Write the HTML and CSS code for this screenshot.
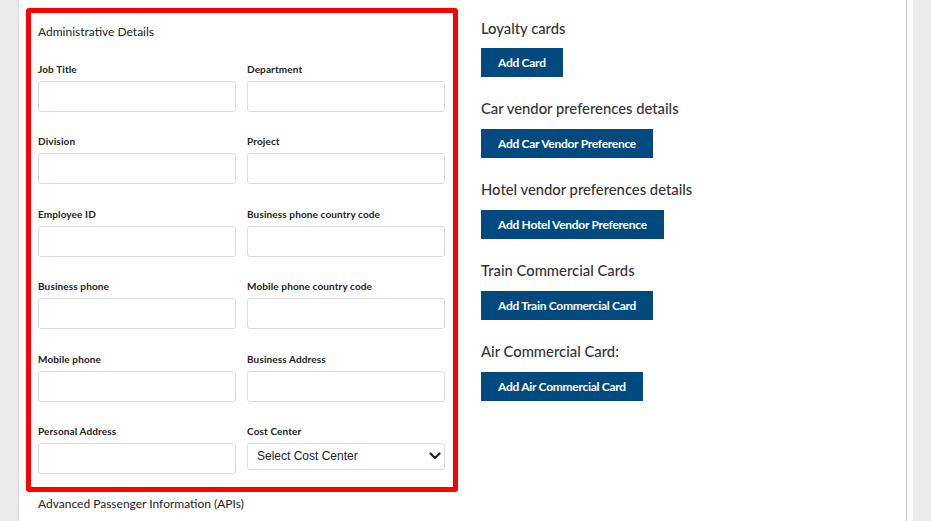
FILE: index.html
```html
<!DOCTYPE html>
<html lang="en">
<head>
<meta charset="utf-8">
<title>Profile</title>
<link rel="stylesheet" href="styles.css">
</head>
<body>
<div class="page">
  <div class="panel">
    <div class="content">
      <div class="left-col">
        <section class="admin-box">
          <h2 class="admin-title">Administrative Details</h2>
          <div class="field-grid">
            <div class="field"><label>Job Title</label><input type="text"></div>
            <div class="field"><label>Department</label><input type="text"></div>
            <div class="field"><label>Division</label><input type="text"></div>
            <div class="field"><label>Project</label><input type="text"></div>
            <div class="field"><label>Employee ID</label><input type="text"></div>
            <div class="field"><label>Business phone country code</label><input type="text"></div>
            <div class="field"><label>Business phone</label><input type="text"></div>
            <div class="field"><label>Mobile phone country code</label><input type="text"></div>
            <div class="field"><label>Mobile phone</label><input type="text"></div>
            <div class="field"><label>Business Address</label><input type="text"></div>
            <div class="field"><label>Personal Address</label><input type="text"></div>
            <div class="field">
              <label>Cost Center</label>
              <div class="select-wrap">
                <select><option>Select Cost Center</option></select>
                <svg class="chevron" width="12" height="8" viewBox="0 0 12 8"><path d="M1.5 1.5 L6 6 L10.5 1.5" fill="none" stroke="#222" stroke-width="2.2" stroke-linecap="round" stroke-linejoin="round"/></svg>
              </div>
            </div>
          </div>
        </section>
        <div class="api-title">Advanced Passenger Information (APIs)</div>
      </div>
      <div class="right-col">
        <div class="section"><h3>Loyalty cards</h3><button>Add Card</button></div>
        <div class="section"><h3>Car vendor preferences details</h3><button>Add Car Vendor Preference</button></div>
        <div class="section"><h3>Hotel vendor preferences details</h3><button>Add Hotel Vendor Preference</button></div>
        <div class="section"><h3>Train Commercial Cards</h3><button>Add Train Commercial Card</button></div>
        <div class="section"><h3>Air Commercial Card:</h3><button>Add Air Commercial Card</button></div>
      </div>
    </div>
  </div>
</div>
</body>
</html>
```

FILE: styles.css
```css
* { box-sizing: border-box; }
html, body { margin: 0; padding: 0; }
body {
  background: #ebebeb;
  font-family: Lato, "Open Sans", sans-serif;
  color: #222;
  overflow: hidden;
  height: 521px;
}
.page { display: flex; height: 521px; }
.panel {
  margin-left: 18px;
  width: 895px;
  background: #fff;
  border-left: 1px solid #d9d9d9;
  height: 100%;
}
.content {
  width: 888px;
  height: 100%;
  border-right: 1px solid #c8c8c8;
  padding: 8px 0 0 7px;
  display: flex;
  gap: 23px;
}
.left-col { width: 432px; flex: none; }
.admin-box {
  border: 5px solid #ff0000;
  border-radius: 3px;
  padding: 11px 8px 13px 7px;
}
.admin-title {
  margin: 0 0 22px 0;
  font-size: 12px;
  line-height: 16px;
  font-weight: 400;
  color: #222;
}
.field-grid {
  display: grid;
  grid-template-columns: 198px 198px;
  column-gap: 11px;
  row-gap: 22.4px;
}
.field { display: flex; flex-direction: column; }
.field label {
  font-size: 10px;
  line-height: 14px;
  font-weight: 700;
  letter-spacing: 0.12px;
  color: #222;
  margin-bottom: 5px;
}
.field input {
  height: 31px;
  border: 1px solid #dcdcdc;
  border-radius: 3px;
  margin: 0;
  padding: 0 8px;
  font-family: "Liberation Sans", Arial, sans-serif;
  font-size: 12px;
  background: #fff;
}
.select-wrap { position: relative; height: 31px; }
.select-wrap select {
  width: 100%;
  height: 27px;
  appearance: none;
  -webkit-appearance: none;
  border: 1px solid #dcdcdc;
  border-radius: 3px;
  background: #fff;
  padding: 0 9px;
  margin: 0;
  font-family: "Liberation Sans", Arial, sans-serif;
  font-size: 12px;
  color: #222;
}
.chevron { position: absolute; right: 4px; top: 9px; }
.api-title {
  margin: 4px 0 0 12px;
  font-size: 12px;
  line-height: 16px;
  color: #222;
}
.right-col { padding-top: 9px; }
.section { margin-bottom: 21px; }
.section h3 {
  margin: 0 0 11px 0;
  font-size: 14.8px;
  line-height: 20px;
  font-weight: 500;
  color: #333;
}
.section:first-child h3 {
  padding-top: 1px;
  margin-bottom: 10px;
}
.section button {
  display: block;
  height: 29px;
  padding: 0 17px;
  border: none;
  border-radius: 0;
  background: #004a80;
  color: #fff;
  font-family: Lato, "Open Sans", sans-serif;
  font-size: 12px;
  font-weight: 700;
  letter-spacing: -0.28px;
}
```
